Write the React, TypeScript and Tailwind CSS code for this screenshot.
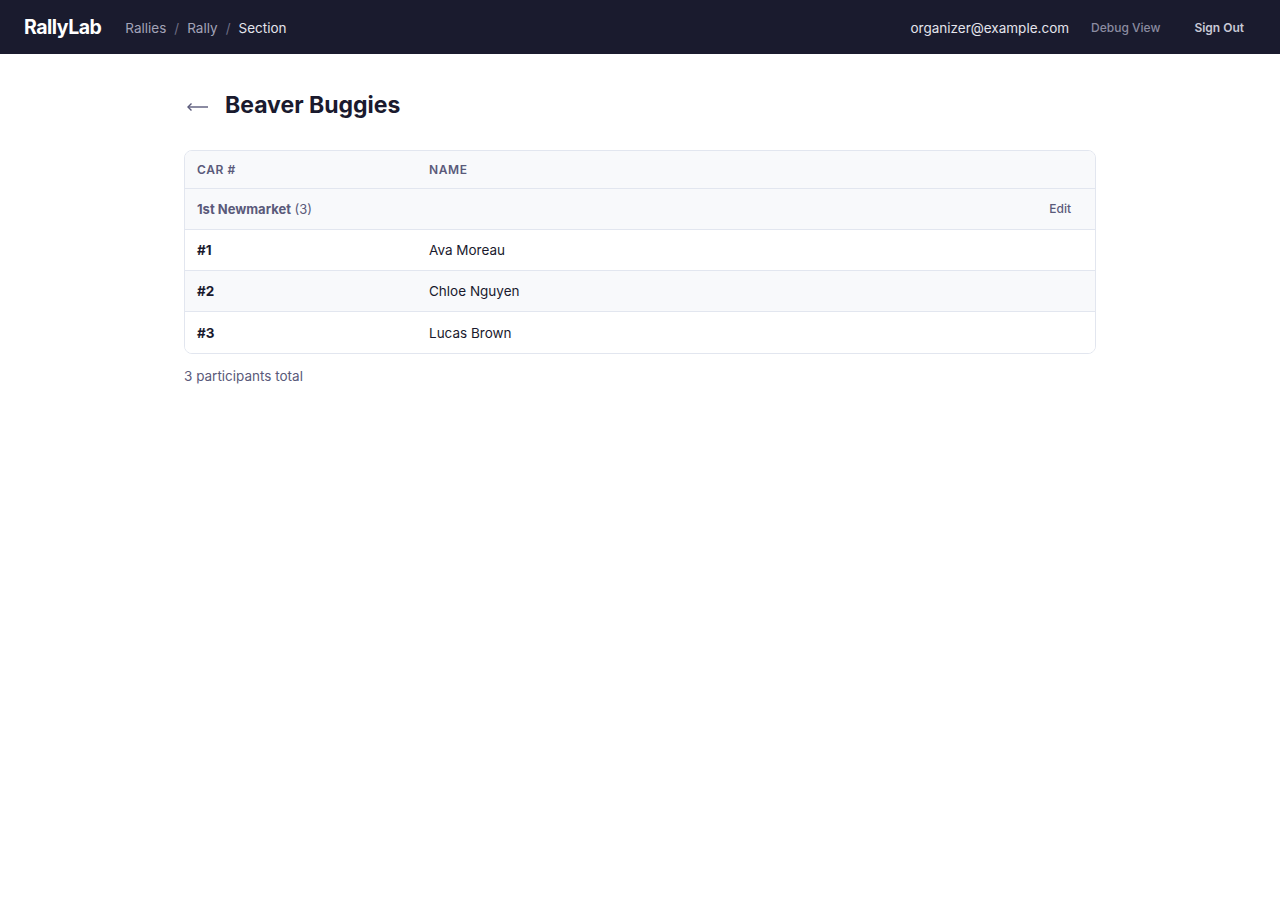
export default function App() {
  const participants = [
    { car: "#1", name: "Ava Moreau" },
    { car: "#2", name: "Chloe Nguyen" },
    { car: "#3", name: "Lucas Brown" },
  ]

  return (
    <div className="min-h-screen bg-white font-['Inter','Liberation_Sans',sans-serif] text-[#1a1a2e]">
      <header className="flex h-[54px] items-center justify-between bg-[#1a1b2e] px-6 pt-[2px]">
        <div className="flex items-center">
          <span className="text-[19.5px] font-bold tracking-tight text-white">RallyLab</span>
          <nav className="ml-6 flex items-center gap-2 text-[13.5px]">
            <span className="text-[#a3a3b8]">Rallies</span>
            <span className="text-[#6e6e85]">/</span>
            <span className="text-[#a3a3b8]">Rally</span>
            <span className="text-[#6e6e85]">/</span>
            <span className="text-[#e4e4ec]">Section</span>
          </nav>
        </div>
        <div className="flex items-center gap-2.5">
          <span className="text-[13.5px] text-[#e4e4ec]">organizer@example.com</span>
          <button className="px-3 py-1.5 text-xs font-medium text-[#8b8ba0]">Debug View</button>
          <button className="px-3 py-1.5 text-xs font-semibold text-[#c9c9d6]">Sign Out</button>
        </div>
      </header>

      <main className="mx-auto max-w-[912px] pt-[34px]">
        <div className="flex items-center gap-[15px]">
          {/* back arrow */}
          <svg width="24" height="10" viewBox="0 0 24 10" fill="none" className="ml-[2px] mt-[3px] text-[#5a5a7a]">
            <path d="M2 5H22" stroke="currentColor" strokeWidth="1.4" />
            <path d="M5.5 1.5L2 5L5.5 8.5" stroke="currentColor" strokeWidth="1.4" />
          </svg>
          <h1 className="text-[23px] font-bold">Beaver Buggies</h1>
        </div>

        <div className="mt-[27px] overflow-hidden rounded-lg border border-[#e2e6ef]">
          <table className="w-full table-fixed border-collapse text-[13.5px]">
            <thead>
              <tr className="bg-[#f8f9fb] text-left">
                <th className="h-[38px] w-[232px] px-3 pt-[2px] text-xs font-semibold uppercase tracking-wider text-[#5a5a7a]">Car #</th>
                <th className="h-[38px] px-3 pt-[2px] text-xs font-semibold uppercase tracking-wider text-[#5a5a7a]">Name</th>
                <th className="h-[38px] w-[108px] px-3"></th>
              </tr>
            </thead>
            <tbody>
              <tr className="border-t border-[#e2e6ef] bg-[#f8f9fb]">
                <td colSpan={2} className="h-[41px] px-3 pt-px text-[13px] text-[#5a5a7a]">
                  <span className="font-bold">1st Newmarket</span> (3)
                </td>
                <td className="h-[41px] pr-3 text-right">
                  <button className="px-3 py-1 text-xs font-medium text-[#5a5a7a]">Edit</button>
                </td>
              </tr>
              {participants.map((p, i) => (
                <tr key={p.car} className={`border-t border-[#e2e6ef] ${i % 2 === 1 ? "bg-[#f8f9fb]" : "bg-white"}`}>
                  <td className="h-[41px] px-3 pt-px font-bold">{p.car}</td>
                  <td className="h-[41px] px-3 pt-px">{p.name}</td>
                  <td className="h-[41px] px-3"></td>
                </tr>
              ))}
            </tbody>
          </table>
        </div>

        <p className="mt-[12px] text-[13.5px] text-[#5a5a7a]">3 participants total</p>
      </main>
    </div>
  )
}
